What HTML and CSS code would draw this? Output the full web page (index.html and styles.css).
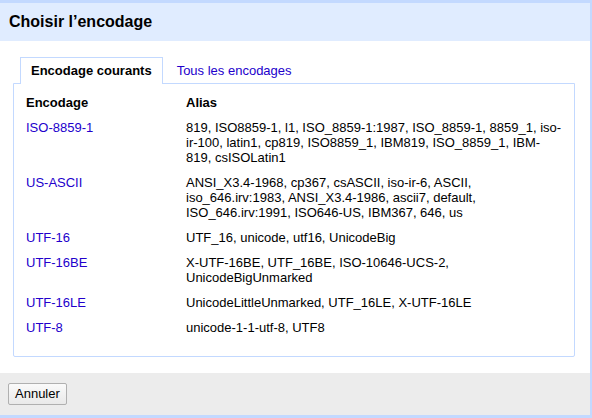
FILE: index.html
```html
<!DOCTYPE html>
<html lang="fr">
<head>
<meta charset="utf-8">
<title>Choisir l’encodage</title>
<link rel="stylesheet" href="styles.css">
</head>
<body>
<div class="dialog">
  <div class="title">Choisir l’encodage</div>
  <div class="content">
    <div class="tabs">
      <div class="tab active">Encodage courants</div>
      <a class="tab" href="#">Tous les encodages</a>
    </div>
    <div class="panel">
      <table class="enc">
        <thead>
          <tr><th class="c1">Encodage</th><th class="c2">Alias</th></tr>
        </thead>
        <tbody>
          <tr><td class="c1"><a href="#">ISO-8859-1</a></td><td class="c2">819, ISO8859-1, l1, ISO_8859-1:1987, ISO_8859-1, 8859_1, iso-ir-100, latin1, cp819, ISO8859_1, IBM819, ISO_8859_1, IBM-819, csISOLatin1</td></tr>
          <tr><td class="c1"><a href="#">US-ASCII</a></td><td class="c2">ANSI_X3.4-1968, cp367, csASCII, iso-ir-6, ASCII, iso_646.irv:1983, ANSI_X3.4-1986, ascii7, default, ISO_646.irv:1991, ISO646-US, IBM367, 646, us</td></tr>
          <tr><td class="c1"><a href="#">UTF-16</a></td><td class="c2">UTF_16, unicode, utf16, UnicodeBig</td></tr>
          <tr><td class="c1"><a href="#">UTF-16BE</a></td><td class="c2">X-UTF-16BE, UTF_16BE, ISO-10646-UCS-2, UnicodeBigUnmarked</td></tr>
          <tr><td class="c1"><a href="#">UTF-16LE</a></td><td class="c2">UnicodeLittleUnmarked, UTF_16LE, X-UTF-16LE</td></tr>
          <tr><td class="c1"><a href="#">UTF-8</a></td><td class="c2">unicode-1-1-utf-8, UTF8</td></tr>
        </tbody>
      </table>
    </div>
  </div>
  <div class="footer">
    <button class="btn" type="button">Annuler</button>
  </div>
</div>
</body>
</html>
```
FILE: styles.css
```css
html, body {
  margin: 0;
  padding: 0;
  background: #fff;
}
body {
  font-family: "Liberation Sans", Arial, sans-serif;
  font-size: 13px;
  color: #000;
}
.dialog {
  box-sizing: border-box;
  width: 592px;
  height: 418px;
  border-top: 3px solid #c3d9ff;
  border-right: 2px solid #c3d9ff;
  border-bottom: 3px solid #c3d9ff;
  display: flex;
  flex-direction: column;
  background: #fff;
}
.title {
  height: 38px;
  background: #e0ecff;
  padding-left: 9px;
  font-size: 16px;
  font-weight: bold;
  line-height: 38px;
}
.content {
  flex: 1;
  padding: 16px 15px 16px 13px;
  display: flex;
  flex-direction: column;
}
.tabs {
  display: flex;
  padding-left: 7px;
}
.tab {
  display: block;
  height: 15px;
  line-height: 15px;
  padding: 5px 13px 6px;
  color: #2200cc;
  text-decoration: none;
  border: 1px solid transparent;
  border-bottom: none;
  margin-bottom: -1px;
}
.tab.active {
  position: relative;
  z-index: 1;
  background: #fff;
  color: #000;
  font-weight: bold;
  padding: 5px 10px 6px;
  border-color: #c3d9ff;
}
.panel {
  flex: 1;
  border: 1px solid #c3d9ff;
  border-radius: 0 0 2px 2px;
  padding: 6px 8px;
}
.enc {
  border-collapse: collapse;
  line-height: 15px;
}
.enc th, .enc td {
  padding: 5px 4px;
  text-align: left;
  vertical-align: top;
}
.enc th {
  font-weight: bold;
}
.enc .c1 {
  width: 152px;
}
.enc .c2 {
  width: 376px;
}
.enc a {
  color: #2200cc;
  text-decoration: none;
}
.footer {
  height: 42px;
  background: #ececec;
  padding: 10px 8px 0;
  box-sizing: border-box;
}
.btn {
  font-family: "Liberation Sans", Arial, sans-serif;
  font-size: 13px;
  color: #000;
  height: 22px;
  padding: 0 6px;
  border: 1px solid #b0b0b0;
  border-radius: 2px;
  background: linear-gradient(#fafafa, #e9e9e9);
  line-height: 18px;
}
```
